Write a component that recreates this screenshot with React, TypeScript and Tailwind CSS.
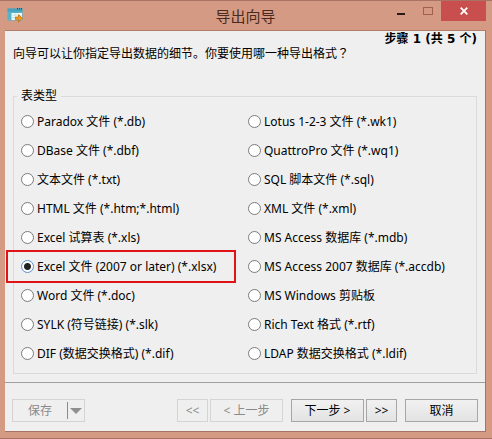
import React, { useState } from 'react';
import clsx from 'clsx';

interface ExportFormat {
  id: string;
  label: string;
  highlighted?: boolean;
}

// Listed column by column
const formats: ExportFormat[] = [
  { id: 'db', label: 'Paradox 文件 (*.db)' },
  { id: 'dbf', label: 'DBase 文件 (*.dbf)' },
  { id: 'txt', label: '文本文件 (*.txt)' },
  { id: 'html', label: 'HTML 文件 (*.htm;*.html)' },
  { id: 'xls', label: 'Excel 试算表 (*.xls)' },
  { id: 'xlsx', label: 'Excel 文件 (2007 or later) (*.xlsx)', highlighted: true },
  { id: 'doc', label: 'Word 文件 (*.doc)' },
  { id: 'slk', label: 'SYLK (符号链接) (*.slk)' },
  { id: 'dif', label: 'DIF (数据交换格式) (*.dif)' },
  { id: 'wk1', label: 'Lotus 1-2-3 文件 (*.wk1)' },
  { id: 'wq1', label: 'QuattroPro 文件 (*.wq1)' },
  { id: 'sql', label: 'SQL 脚本文件 (*.sql)' },
  { id: 'xml', label: 'XML 文件 (*.xml)' },
  { id: 'mdb', label: 'MS Access 数据库 (*.mdb)' },
  { id: 'accdb', label: 'MS Access 2007 数据库 (*.accdb)' },
  { id: 'clipboard', label: 'MS Windows 剪贴板' },
  { id: 'rtf', label: 'Rich Text 格式 (*.rtf)' },
  { id: 'ldif', label: 'LDAP 数据交换格式 (*.ldif)' },
];

const WizardIcon = () => (
  <svg className="w-4 h-4" viewBox="0 0 16 16" aria-hidden="true">
    <rect x="0.5" y="1.5" width="15" height="12" fill="#55b4c8" />
    <rect x="0.5" y="1.5" width="15" height="3" fill="#4a9fba" />
    <path d="M10 1h1v1.5h-1zM12 1h1v1.5h-1zM14 1h1v1.5h-1z" fill="#3a4668" />
    <rect x="4.5" y="6" width="10.5" height="7" fill="#f4fbfc" />
    <path d="M4.5 8.2h10.5M4.5 10.5h10.5M8 6v7" stroke="#b9dde5" strokeWidth="0.7" />
    <path d="M8.5 10h3V7.6l4 3.7-4 3.7v-2.4h-3z" fill="#f09a1c" stroke="#b8680c" strokeWidth="0.7" />
  </svg>
);

const TitleBar = () => (
  <header className="relative h-[30px] shrink-0 flex items-center justify-center">
    <span className="absolute left-[2px] top-[6px]">
      <WizardIcon />
    </span>
    <h1 className="text-[15px] leading-5 text-[#4a2a20]">导出向导</h1>
    <div className="absolute right-0 top-0 h-5 flex">
      <button type="button" aria-label="最小化" className="w-[27px] flex justify-center pt-3">
        <span className="w-2 h-[2px] bg-[#2a1a14]" />
      </button>
      <button type="button" aria-label="最大化" disabled className="w-[27px] flex justify-center pt-[6px]">
        <span className="w-[10px] h-2 border border-[#a0604e]" />
      </button>
      <button type="button" aria-label="关闭" className="w-[45px] flex items-center justify-center bg-[#c94f4f]">
        <svg className="w-2 h-2" viewBox="0 0 8 8" aria-hidden="true">
          <path d="M.7.7l6.6 6.6M7.3.7L.7 7.3" stroke="#fff" strokeWidth="1.8" />
        </svg>
      </button>
    </div>
  </header>
);

interface FormatOptionProps {
  format: ExportFormat;
  checked: boolean;
  onSelect: (id: string) => void;
}

const FormatOption: React.FC<FormatOptionProps> = ({ format, checked, onSelect }) => (
  <label className="relative h-[29px] flex items-center gap-[3px] whitespace-nowrap">
    <input
      type="radio"
      name="format"
      value={format.id}
      checked={checked}
      onChange={() => onSelect(format.id)}
      className={clsx(
        'appearance-none w-[13px] h-[13px] shrink-0 rounded-full border bg-white',
        checked
          ? 'border-[#5a8fc8] bg-[radial-gradient(circle,#222_3px,#fff_4px)]'
          : 'border-[#7c7c7c]'
      )}
    />
    <span>{format.label}</span>
    {format.highlighted && (
      <span className="absolute -left-[15px] -inset-y-[2px] w-[230px] border-2 border-[#e01414] pointer-events-none" />
    )}
  </label>
);

interface WizardButtonProps {
  children: React.ReactNode;
  disabled?: boolean;
  narrow?: boolean;
}

const WizardButton: React.FC<WizardButtonProps> = ({ children, disabled, narrow }) => (
  <button
    type="button"
    disabled={disabled}
    className={clsx(
      'h-[23px] border flex items-center justify-center whitespace-nowrap',
      narrow ? 'w-[31px]' : 'w-[73px]',
      disabled
        ? 'border-[#d4d4d4] text-[#8a8a8a]'
        : 'border-[#a6a6a6] bg-linear-to-b from-[#f1f1f1] to-[#e3e3e3] text-black'
    )}
  >
    {children}
  </button>
);

const App: React.FC = () => {
  const [selected, setSelected] = useState('xlsx');

  return (
    <div className="min-h-screen flex flex-col bg-[#d49a84] border-t border-b border-[#a97363] pl-[5px] pr-[6px] pb-[6px] font-['Noto_Sans','Noto_Sans_CJK_SC',sans-serif] text-[12px] leading-[14px] text-black">
      <TitleBar />

      <main className="flex-1 flex flex-col bg-[#efefef] border-b border-r border-[#a97363] shadow-[0_-1px_0_#b27c6a]">
        <p className="self-end pr-2 pt-px font-['DejaVu_Sans','Noto_Sans_CJK_SC',sans-serif] font-bold">
          步骤 1 (共 5 个)
        </p>
        <p className="px-2">
          向导可以让你指定导出数据的细节。你要使用哪一种导出格式
          <span className="font-['Noto_Sans_CJK_TC',sans-serif]">？</span>
        </p>

        <fieldset className="mx-2 mt-[27px] border border-[#dadada] pl-[3px] pr-px pb-[5px]">
          <legend className="px-1 leading-4">表类型</legend>
          <div className="grid grid-cols-2 grid-rows-9 grid-flow-col pt-[3px] pl-1">
            {formats.map((format) => (
              <FormatOption
                key={format.id}
                format={format}
                checked={selected === format.id}
                onSelect={setSelected}
              />
            ))}
          </div>
        </fieldset>

        <footer className="mt-2 border-t border-[#a0a0a0] flex justify-between px-[7px] pt-4">
          <button
            type="button"
            disabled
            className="w-[73px] h-[23px] border border-[#d4d4d4] text-[#8a8a8a] flex items-center"
          >
            <span className="flex-1">保存</span>
            <span className="h-[17px] border-l border-[#8a8a8a] px-[2px] flex items-center">
              <svg className="w-3 h-[6px]" viewBox="0 0 12 6" aria-hidden="true">
                <path d="M0 0h12L6 6z" fill="#8f8f8f" />
              </svg>
            </span>
          </button>
          <div className="flex gap-2">
            <div className="flex gap-[2px]">
              <WizardButton disabled narrow>&lt;&lt;</WizardButton>
              <WizardButton disabled>&lt; 上一步</WizardButton>
            </div>
            <div className="flex gap-[2px]">
              <WizardButton>下一步 &gt;</WizardButton>
              <WizardButton narrow>&gt;&gt;</WizardButton>
            </div>
            <WizardButton>取消</WizardButton>
          </div>
        </footer>
      </main>
    </div>
  );
};

export default App;
